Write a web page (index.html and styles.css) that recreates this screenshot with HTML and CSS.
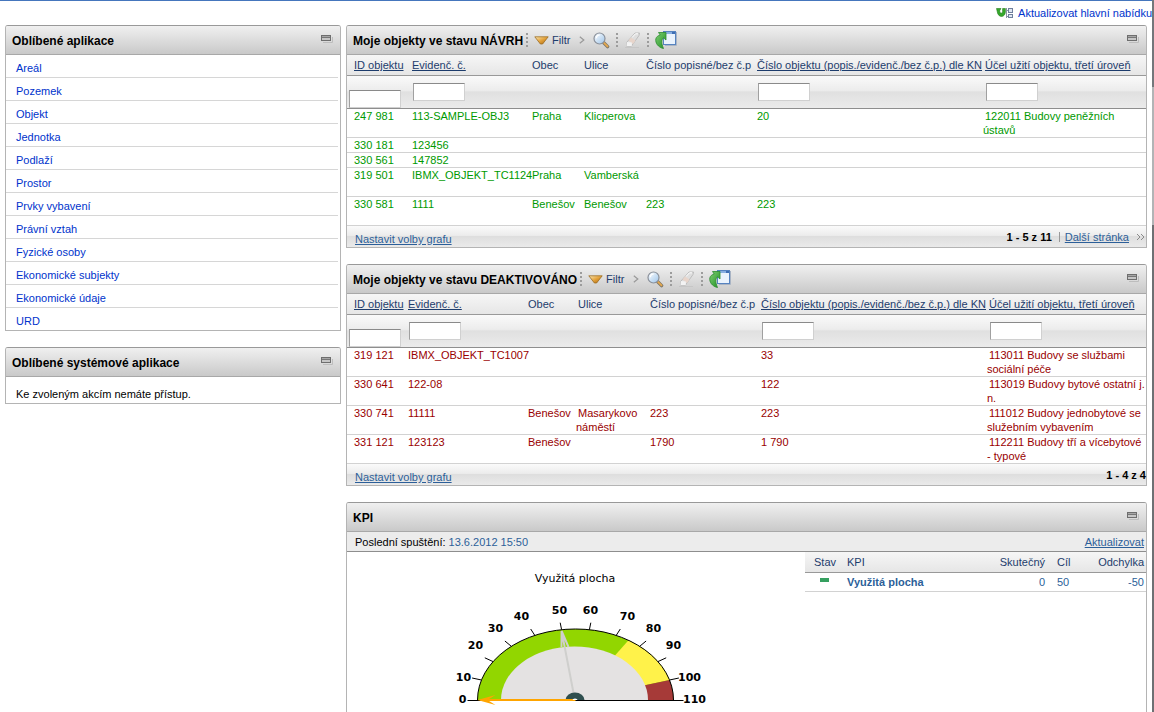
FILE: index.html
```html
<!DOCTYPE html>
<html lang="cs">
<head>
<meta charset="utf-8">
<title>Centrum spouštění</title>
<link rel="stylesheet" href="styles.css">
</head>
<body>
<svg class="defs" aria-hidden="true">
  <defs>
    <linearGradient id="gold" x1="0" y1="0" x2="1" y2="1"><stop offset="0" stop-color="#fdeab4"/><stop offset=".5" stop-color="#e3a23c"/><stop offset="1" stop-color="#a8650c"/></linearGradient>
    <linearGradient id="leaf" x1="0" y1="0" x2="1" y2="1"><stop offset="0" stop-color="#7fcf74"/><stop offset="1" stop-color="#1f8f22"/></linearGradient>
    <linearGradient id="glass" x1="0" y1="0" x2="1" y2="1"><stop offset="0" stop-color="#ffffff"/><stop offset="1" stop-color="#9cc4ea"/></linearGradient>
    <symbol id="i-min" viewBox="0 0 12 8"><path d="M2 7.5H11.5V2" fill="none" stroke="#bdbdbd"/><rect x=".5" y=".5" width="9" height="5" fill="#c6c6c6" stroke="#6e6e6e"/><path d="M1 1.5H9" stroke="#a6a6a6"/><path d="M1 2.5H9" stroke="#777"/></symbol>
    <symbol id="i-filter" viewBox="0 0 15 9"><path d="M.8.8H14.2L8.6 8H6.4Z" fill="url(#gold)" stroke="#9a6a20" stroke-width=".8"/></symbol>
    <symbol id="i-chev" viewBox="0 0 6 8"><path d="M.8.8L4.8 4L.8 7.2" fill="none" stroke="#999" stroke-width="1.2"/></symbol>
    <symbol id="i-find" viewBox="0 0 17 17"><path d="M10.500 10.500L14.600 14.600" stroke="#7d7566" stroke-width="3.400" stroke-linecap="round"/><path d="M11 10.800L14.500 14.300" stroke="#e6a94e" stroke-width="1.800" stroke-linecap="round"/><circle cx="6.500" cy="6.500" r="5.500" fill="url(#glass)" stroke="#8a909a" stroke-width="1.200"/><path d="M3.400 6.200A3.400 3.400 0 0 1 6.800 3" fill="none" stroke="#fff" stroke-width="1.200"/></symbol>
    <symbol id="i-erase" viewBox="0 0 17 17"><path d="M1 15.500H15" stroke="#c6c6c6"/><path d="M3 10L11 1H15.500L15 3.500L7.500 14H2.500Z" fill="#dedede" stroke="#b4b4b4" stroke-width=".8"/><path d="M7 5.500L11.500 8.500L9 12L4.500 8.500Z" fill="#e8d5cb"/><path d="M3 10L7.800 10.500V14H2.500Z" fill="#f3f3f3"/><path d="M8 5.500L11.500 1.800H14" fill="none" stroke="#fff"/></symbol>
    <symbol id="i-restore" viewBox="0 0 22 20"><rect x="8.500" y="1.500" width="12" height="13" fill="#eaf3fd" stroke="#5683c0"/><path d="M9 2H20V4H9Z" fill="#88afe2"/><path d="M17 2H20V4H17Z" fill="#3f6fb5"/><path d="M21.500 2V15.500H10" fill="none" stroke="#a9b4c4"/><path d="M3.500 2.500H11V10L8.400 7.800C6.400 10 6.200 13.200 8.500 18.500C3 17.400.2 12.800.8 9C1.300 6.800 3 5.600 5.200 5Z" fill="url(#leaf)" stroke="#2b8a2e" stroke-width=".8"/></symbol>
    <symbol id="i-refresh" viewBox="0 0 18 12"><path d="M.5 1.500H5L3.800 3.500C3.400 6.500 6.300 7.200 6.600 4.500V1.500H9.400V5C9 11 1.800 11 1.200 4.400Z" fill="#35a82b" stroke="#237c1d" stroke-width=".6"/><path d="M10.500 1V11M10.500 3.500H13M10.500 9.500H13" stroke="#8a94a6" fill="none"/><rect x="12.500" y="1.500" width="4" height="4" fill="#dfe6f2" stroke="#6f7f9c"/><rect x="12.500" y="7.500" width="4" height="3" fill="#dfe6f2" stroke="#6f7f9c"/></symbol>
  </defs>
</svg>

<nav class="topbar">
  <a class="refresh" href="#"><svg width="18" height="12" aria-hidden="true"><use href="#i-refresh"/></svg>Aktualizovat hlavní nabídku</a>
</nav>

<main class="layout">
  <div class="column">
    <section class="panel">
      <header class="panel-head"><h2>Oblíbené aplikace</h2><button class="min" aria-label="Minimalizovat"><svg width="12" height="8"><use href="#i-min"/></svg></button></header>
      <ul class="links">
        <li><a href="#">Areál</a></li><li><a href="#">Pozemek</a></li><li><a href="#">Objekt</a></li><li><a href="#">Jednotka</a></li><li><a href="#">Podlaží</a></li><li><a href="#">Prostor</a></li><li><a href="#">Prvky vybavení</a></li><li><a href="#">Právní vztah</a></li><li><a href="#">Fyzické osoby</a></li><li><a href="#">Ekonomické subjekty</a></li><li><a href="#">Ekonomické údaje</a></li><li><a href="#">URD</a></li>
      </ul>
    </section>
    <section class="panel">
      <header class="panel-head"><h2>Oblíbené systémové aplikace</h2><button class="min" aria-label="Minimalizovat"><svg width="12" height="8"><use href="#i-min"/></svg></button></header>
      <p class="note">Ke zvoleným akcím nemáte přístup.</p>
    </section>
  </div>

  <div class="column">
    <section class="panel">
      <header class="panel-head">
        <h2>Moje objekty ve stavu NÁVRH</h2>
        <div class="tools">
          <i class="sep"></i>
          <button class="filter"><svg width="15" height="9" aria-hidden="true"><use href="#i-filter"/></svg>Filtr</button>
          <svg class="chev" width="6" height="8" aria-hidden="true"><use href="#i-chev"/></svg>
          <button aria-label="Hledat"><svg width="17" height="17"><use href="#i-find"/></svg></button>
          <i class="sep"></i>
          <button aria-label="Vymazat filtr"><svg width="17" height="17"><use href="#i-erase"/></svg></button>
          <i class="sep"></i>
          <button aria-label="Obnovit"><svg width="22" height="20"><use href="#i-restore"/></svg></button>
        </div>
        <button class="min" aria-label="Minimalizovat"><svg width="12" height="8"><use href="#i-min"/></svg></button>
      </header>
      <table class="grid draft">
        <colgroup><col class="c-id"><col class="c-ev"><col class="c-city"><col class="c-street"><col class="c-num"><col class="c-obj"><col></colgroup>
        <thead>
          <tr class="titles"><th><a href="#">ID objektu</a></th><th><a href="#">Evidenč. č.</a></th><th>Obec</th><th>Ulice</th><th>Číslo popisné/bez č.p</th><th><a href="#">Číslo objektu (popis./evidenč./bez č.p.) dle KN</a></th><th><a href="#">Účel užití objektu, třetí úroveň</a></th></tr>
          <tr class="filters"><td><input type="text" aria-label="ID objektu"></td><td><input type="text" aria-label="Evidenč. č."></td><td></td><td></td><td></td><td><input type="text" aria-label="Číslo objektu"></td><td><input type="text" aria-label="Účel užití objektu"></td></tr>
        </thead>
        <tbody>
          <tr class="tall"><td>247 981</td><td>113-SAMPLE-OBJ3</td><td>Praha</td><td>Klicperova</td><td></td><td>20</td><td>122011 Budovy peněžních ústavů</td></tr>
          <tr><td>330 181</td><td>123456</td><td></td><td></td><td></td><td></td><td></td></tr>
          <tr><td>330 561</td><td>147852</td><td></td><td></td><td></td><td></td><td></td></tr>
          <tr class="tall"><td>319 501</td><td>IBMX_OBJEKT_TC1124</td><td>Praha</td><td>Vamberská</td><td></td><td></td><td></td></tr>
          <tr class="tall"><td>330 581</td><td>1111</td><td>Benešov</td><td>Benešov</td><td>223</td><td>223</td><td></td></tr>
        </tbody>
      </table>
      <footer class="panel-foot">
        <a href="#">Nastavit volby grafu</a>
        <div class="pager"><b>1 - 5 z 11</b><span class="next"><a href="#">Další stránka</a></span><svg width="10" height="8" aria-hidden="true"><path d="M1 1L4 4L1 7M5 1L8 4L5 7" fill="none" stroke="#8a8a8a"/></svg></div>
      </footer>
    </section>

    <section class="panel">
      <header class="panel-head">
        <h2>Moje objekty ve stavu DEAKTIVOVÁNO</h2>
        <div class="tools">
          <i class="sep"></i>
          <button class="filter"><svg width="15" height="9" aria-hidden="true"><use href="#i-filter"/></svg>Filtr</button>
          <svg class="chev" width="6" height="8" aria-hidden="true"><use href="#i-chev"/></svg>
          <button aria-label="Hledat"><svg width="17" height="17"><use href="#i-find"/></svg></button>
          <i class="sep"></i>
          <button aria-label="Vymazat filtr"><svg width="17" height="17"><use href="#i-erase"/></svg></button>
          <i class="sep"></i>
          <button aria-label="Obnovit"><svg width="22" height="20"><use href="#i-restore"/></svg></button>
        </div>
        <button class="min" aria-label="Minimalizovat"><svg width="12" height="8"><use href="#i-min"/></svg></button>
      </header>
      <table class="grid retired">
        <colgroup><col class="c-id"><col class="c-ev"><col class="c-city"><col class="c-street"><col class="c-num"><col class="c-obj"><col></colgroup>
        <thead>
          <tr class="titles"><th><a href="#">ID objektu</a></th><th><a href="#">Evidenč. č.</a></th><th>Obec</th><th>Ulice</th><th>Číslo popisné/bez č.p</th><th><a href="#">Číslo objektu (popis./evidenč./bez č.p.) dle KN</a></th><th><a href="#">Účel užití objektu, třetí úroveň</a></th></tr>
          <tr class="filters"><td><input type="text" aria-label="ID objektu"></td><td><input type="text" aria-label="Evidenč. č."></td><td></td><td></td><td></td><td><input type="text" aria-label="Číslo objektu"></td><td><input type="text" aria-label="Účel užití objektu"></td></tr>
        </thead>
        <tbody>
          <tr class="tall"><td>319 121</td><td>IBMX_OBJEKT_TC1007</td><td></td><td></td><td></td><td>33</td><td>113011 Budovy se službami sociální péče</td></tr>
          <tr class="tall"><td>330 641</td><td>122-08</td><td></td><td></td><td></td><td>122</td><td>113019 Budovy bytové ostatní j. n.</td></tr>
          <tr class="tall"><td>330 741</td><td>11111</td><td>Benešov</td><td>Masarykovo náměstí</td><td>223</td><td>223</td><td>111012 Budovy jednobytové se služebním vybavením</td></tr>
          <tr class="tall"><td>331 121</td><td>123123</td><td>Benešov</td><td></td><td>1790</td><td>1 790</td><td>112211 Budovy tří a vícebytové - typové</td></tr>
        </tbody>
      </table>
      <footer class="panel-foot">
        <a href="#">Nastavit volby grafu</a>
        <div class="pager"><b>1 - 4 z 4</b></div>
      </footer>
    </section>

    <section class="panel">
      <header class="panel-head"><h2>KPI</h2><button class="min" aria-label="Minimalizovat"><svg width="12" height="8"><use href="#i-min"/></svg></button></header>
      <div class="status"><span>Poslední spuštění: <time datetime="2012-06-13T15:50">13.6.2012 15:50</time></span><a href="#">Aktualizovat</a></div>
      <div class="kpi-body">
        <svg class="gauge" viewBox="0 0 458 170" role="img" aria-label="Využitá plocha">
          <text class="gauge-title" x="228" y="30">Využitá plocha</text>
          <g transform="translate(228.5 148)">
            <path d="M-98 0A98 71 0 0 1 98 0Z" fill="#92d600"/>
            <path d="M0 0L53 -59.7A98 71 0 0 1 94 -20Z" fill="#fff24a"/>
            <path d="M0 0L94 -20A98 71 0 0 1 98 0Z" fill="#a63a38"/>
            <path d="M-74.500 0A73.500 53.500 0 0 1 72.500 0Z" fill="#e4e2e2"/>
            <path d="M-98 0A98 71 0 0 1 98 0" fill="none" stroke="#000"/>
            <path d="M-108 .5H108M-94 -20L-103.400 -22M-82.400 -38.400L-90.700 -42.200M-64.200 -53.700L-70.600 -59M-40.700 -64.600L-44.800 -71M-13.900 -70.300L-15.300 -77.300M13.900 -70.300L15.300 -77.300M40.700 -64.600L44.800 -71M64.200 -53.700L70.600 -59M82.400 -38.400L90.700 -42.200M94 -20L103.400 -22" stroke="#000" fill="none"/>
            <path d="M-1 -2L-13.900 -69M-14 -53L-13.900 -69L-7 -53" fill="none" stroke="#cfcfcd" stroke-width="2"/>
            <path d="M-10 0A9.500 7.500 0 0 1 9 0Z" fill="#2f4f4f"/>
            <path d="M0 0H-95" fill="none" stroke="#ffa500" stroke-width="2"/>
            <path d="M-98 0L-80 -5L-88 0L-80 5Z" fill="#ffa500"/>
            <path d="M-3 0A2.500 1.500 0 0 1 2 0Z" fill="#fff"/>
            <g class="scale">
              <text x="-113" y="3">0</text><text x="-112" y="-19">10</text><text x="-100" y="-51">20</text><text x="-80" y="-68">30</text><text x="-54" y="-80">40</text><text x="-16" y="-86">50</text><text x="15" y="-86">60</text><text x="52" y="-80">70</text><text x="78" y="-68">80</text><text x="98" y="-51">90</text><text x="114" y="-19">100</text><text x="119" y="3">110</text>
            </g>
          </g>
        </svg>
        <table class="kpi">
          <colgroup><col class="k-state"><col><col class="k-real"><col class="k-goal"><col class="k-diff"></colgroup>
          <thead><tr><th>Stav</th><th>KPI</th><th class="num">Skutečný</th><th>Cíl</th><th class="num">Odchylka</th></tr></thead>
          <tbody><tr><td><i class="mark"></i></td><td><b>Využitá plocha</b></td><td class="num">0</td><td>50</td><td class="num">-50</td></tr></tbody>
        </table>
      </div>
    </section>
  </div>
</main>
</body>
</html>
```

FILE: styles.css
```css
* { box-sizing: border-box; }
html { overflow: hidden; }
body {
  margin: 0;
  min-height: 100vh;
  padding-right: 2px;
  background: linear-gradient(#74777b 0 87px, #b2b4b6 87px 225px, #6e7073 225px) right top / 2px 100% no-repeat #fff;
  color: #000;
  font: 11px/14px "Liberation Sans", Arial, sans-serif;
}
a { color: #003399; }
button { margin: 0; padding: 0; border: 0; background: none; font: inherit; color: inherit; display: flex; align-items: center; }
svg { display: block; }
.defs { position: absolute; width: 0; height: 0; }

.topbar { display: flex; justify-content: flex-end; height: 25px; border-top: 1px solid #4576bd; }
.refresh { display: flex; align-items: center; gap: 4px; color: #0033cc; text-decoration: none; }

.layout { display: grid; grid-template-columns: 336px minmax(0, 1fr); gap: 5px; padding: 0 5px; align-items: start; }
.column { display: flex; flex-direction: column; gap: 16px; }
.panel { border: 1px solid #b4b4b4; border-top-color: #999; border-radius: 3px 3px 0 0; }
.panel-head {
  display: flex;
  align-items: center;
  height: 29px;
  padding: 0 7px 0 6px;
  border-bottom: 1px solid #a8a8a8;
  border-radius: 2px 2px 0 0;
  background: linear-gradient(#f0f0f0, #c9c9c9);
}
.panel-head h2 { margin: 0; padding-top: 2px; font-size: 12px; line-height: 16px; font-weight: bold; white-space: nowrap; }
.min { margin-left: auto; padding-bottom: 3px; }

.tools { display: flex; align-items: center; gap: 6px; margin-left: 3px; }
.sep { width: 2px; height: 15px; background: repeating-linear-gradient(#9c9c9c 0 2px, transparent 2px 4px); }
.filter { gap: 3px; color: #1d3c6c; }
.chev { margin: 0 2px 0 3px; }

.links { list-style: none; margin: 0; padding: 0 2px 0 0; }
.links li { height: 23px; padding: 6px 0 0 10px; border-bottom: 1px solid #d6d6d6; }
.links li:last-child { border-bottom: 0; height: 22px; }
.links a { color: #0033cc; text-decoration: none; }
.note { margin: 0; padding: 10px 10px 2px; }

.grid { width: 100%; table-layout: fixed; border-collapse: separate; border-spacing: 0; }
.c-id { width: 58px; }
.c-ev { width: 120px; }
.c-city { width: 52px; }
.c-street { width: 62px; }
.c-num { width: 111px; }
.c-obj { width: 228px; }
.retired .c-id { width: 54px; }
.retired .c-city { width: 50px; }
.retired .c-street { width: 72px; }
.titles th {
  height: 21px;
  padding: 0 0 0 7px;
  border-bottom: 1px solid #999;
  background: linear-gradient(#f6f6f6, #e6e6e6);
  color: #1d3c6c;
  font-weight: normal;
  text-align: left;
  white-space: nowrap;
}
.titles a { color: inherit; }
.filters td {
  height: 33px;
  padding: 7px 0 0 8px;
  border-bottom: 1px solid #8e8e8e;
  background: linear-gradient(#fafafa, #ececec 45%, #e0e0e0 50%, #ebebeb);
  vertical-align: top;
}
.filters td:first-child { padding: 0 0 0 2px; vertical-align: bottom; }
.filters input {
  display: block;
  width: 52px;
  height: 18px;
  padding: 1px 2px;
  border: 1px solid #d0d0d0;
  border-top-color: #8a8a8a;
  border-left-color: #a0a0a0;
  background: #fff;
  font: inherit;
}
.grid tbody td { height: 15px; padding: 0 0 0 5px; border-bottom: 1px solid #d2d2d2; text-indent: 2px; vertical-align: top; }
.grid tbody .tall td { height: 29px; }
.grid tbody td:nth-child(-n+3) { white-space: nowrap; }
.draft tbody { color: #009900; }
.retired tbody { color: #990000; }

.panel-foot {
  display: flex;
  justify-content: space-between;
  height: 21px;
  padding-left: 8px;
  background: linear-gradient(#fafafa, #ececec 45%, #dedede 50%, #eaeaea);
}
.panel-foot a, .status a, .status time { color: #2c5f99; }
.panel-foot > a { padding-top: 6px; }
.pager { display: flex; align-items: center; gap: 7px; }
.next { border-left: 1px solid #999; padding-left: 5px; line-height: 10px; }

.status { display: flex; justify-content: space-between; align-items: center; height: 20px; padding: 0 2px 0 8px; background: #ececec; border-bottom: 1px solid #8e8e8e; }
.kpi-body { display: grid; grid-template-columns: minmax(0, 458fr) minmax(0, 341fr); align-items: start; }
.gauge { width: 100%; }
.gauge-title { font: 11px "DejaVu Sans", sans-serif; text-anchor: middle; }
.scale { font: bold 11px "DejaVu Sans", sans-serif; text-anchor: middle; }
.kpi { width: 100%; table-layout: fixed; border-collapse: separate; border-spacing: 0; color: #2c5f99; }
.k-state { width: 37px; }
.k-real { width: 70px; }
.k-goal { width: 36px; }
.k-diff { width: 65px; }
.kpi th { height: 21px; padding: 0 0 0 5px; border-bottom: 1px solid #999; background: linear-gradient(#f6f6f6, #e6e6e6); color: #1d3c6c; font-weight: normal; text-align: left; }
.kpi td { height: 19px; padding: 0 0 0 5px; border-bottom: 1px solid #d2d2d2; }
.kpi th:first-child { padding-left: 9px; }
.kpi th:nth-child(4), .kpi td:nth-child(4) { padding-left: 12px; }
.kpi .num { text-align: right; padding: 0 2px 0 0; }
.kpi .num:nth-child(3) { padding: 0; }
.mark { display: block; width: 9px; height: 4px; margin: 0 0 4px 10px; background: #36a060; }
```
